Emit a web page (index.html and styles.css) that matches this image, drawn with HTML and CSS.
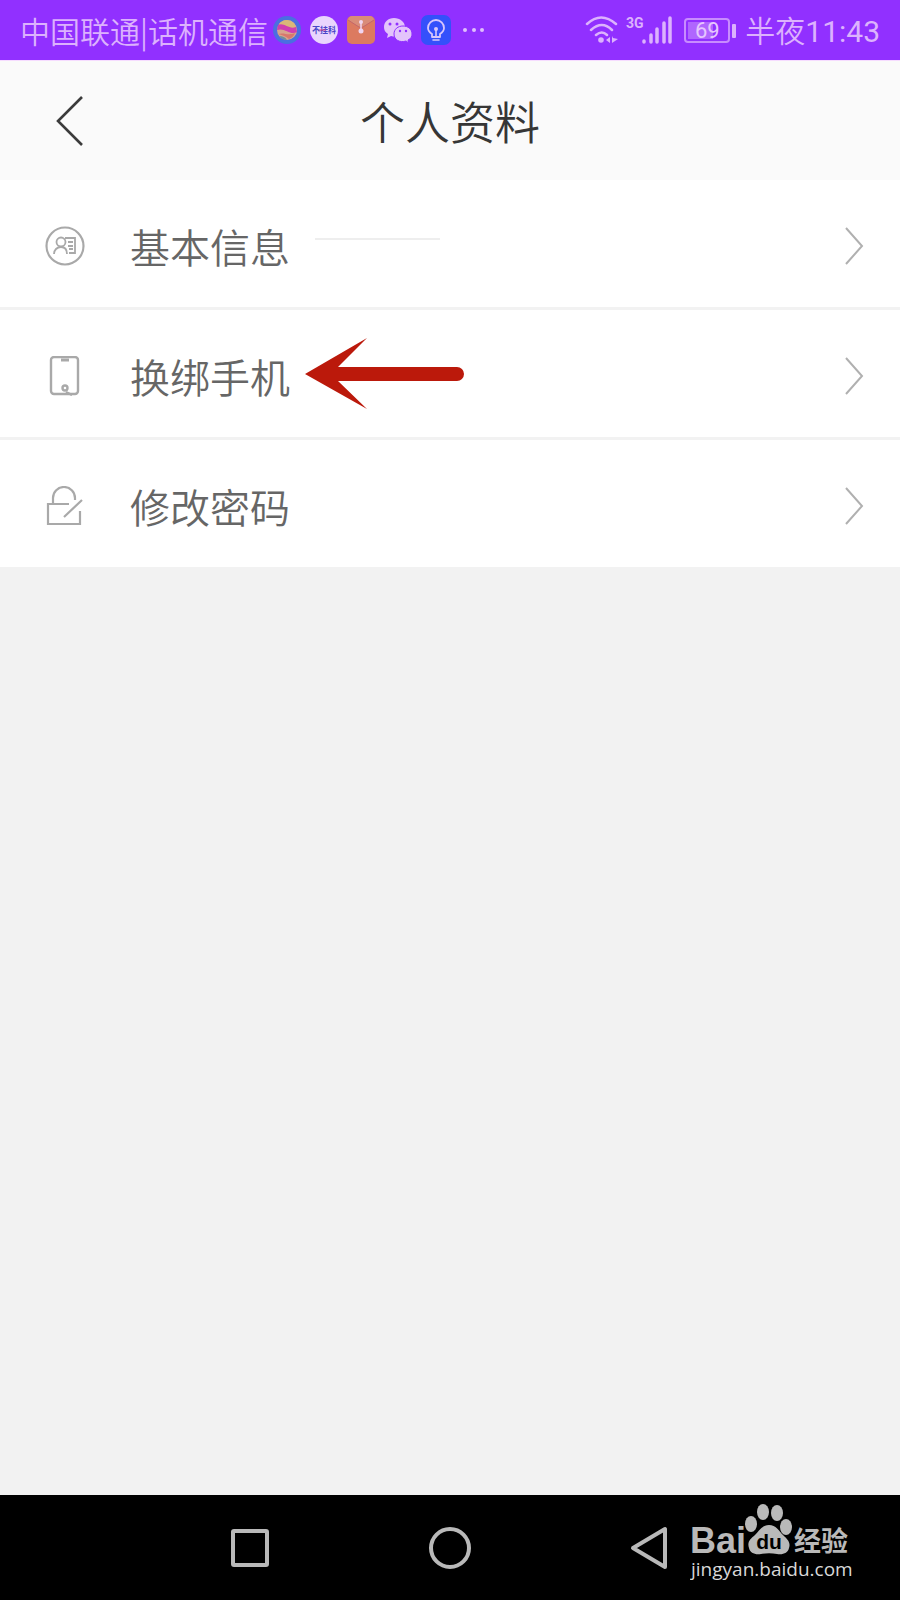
FILE: index.html
```html
<!DOCTYPE html>
<html lang="zh-CN">
<head>
<meta charset="utf-8">
<meta name="viewport" content="width=device-width, initial-scale=1">
<title>个人资料</title>
<link rel="stylesheet" href="styles.css">
</head>
<body>
<div class="screen">
  <div class="status">
    <span class="carrier">中国联通|话机通信</span>
    <div class="apps">
      <svg width="28" height="28" viewBox="0 0 28 28" aria-hidden="true">
        <circle cx="14" cy="14" r="14" fill="#4a6fe0"/>
        <circle cx="14" cy="14" r="10" fill="#d8a48c"/>
        <path d="M6 8a10 10 0 0 1 15-1l2 4c-6 3-11-1-17-3z" fill="#d9b878"/>
        <path d="M5 9c6-3 11 5 18 2l1 5c-7 4-12-5-20-2z" fill="#cf3fb0"/>
        <path d="M5 18c6-2 10 2 17-1a10 10 0 0 1-6 6c-4-3-7-4-11-5z" fill="#d9776c"/>
        <path d="M6 20c4 0 6 1 8 4a10 10 0 0 1-8-4z" fill="#6e8f9c"/>
      </svg>
      <svg width="28" height="28" viewBox="0 0 28 28" aria-hidden="true">
        <circle cx="14" cy="14" r="14" fill="#e9d5fd"/>
        <text x="14" y="17" class="badge-text">不挂科</text>
        <path d="M9 14h7" stroke="#d6447c" stroke-width="1"/>
      </svg>
      <svg width="28" height="28" viewBox="0 0 28 28" aria-hidden="true">
        <rect width="28" height="28" rx="5" fill="#dc7a60"/>
        <path d="M1 4a5 5 0 0 1 4-4h18a5 5 0 0 1 4 4L16 11q-2 1-4 0z" fill="#d98c78"/>
        <path d="M1 4l11 7q2 1 4 0L27 4" fill="none" stroke="#c4666a"/>
        <path d="M14 7v7" stroke="#f0d5ef" stroke-width="1.500"/>
        <circle cx="14" cy="6" r="2" fill="#f0d5ef"/><circle cx="14" cy="15" r="2.500" fill="#f0d5ef"/>
      </svg>
      <svg width="28" height="28" viewBox="0 0 28 28" aria-hidden="true">
        <path d="M10 2C4 2 0 6 0 11c0 3 1 5 4 7l-1 4 4-2c8 2 14-2 14-9 0-5-5-9-11-9z" fill="#e3c3fb"/>
        <path d="M19 10c-5 0-9 3-9 8 0 6 6 9 12 7l3 2-1-3c3-1 4-4 4-6 0-5-4-8-9-8z" fill="#e3c3fb" stroke="#9130ff"/>
        <g fill="#9130ff"><circle cx="6" cy="8" r="1.500"/><circle cx="13" cy="8" r="1.500"/><circle cx="16" cy="15" r="1.200"/><circle cx="22" cy="15" r="1.200"/></g>
      </svg>
      <svg width="30" height="30" viewBox="0 0 30 30" aria-hidden="true">
        <rect width="30" height="30" rx="7" fill="#3450fb"/>
        <path d="M11 22v-3c-3-2-4-4-4-6a8 8 0 0 1 16 0c0 2-1 4-4 6v3z" fill="none" stroke="#d8c6fb" stroke-width="1.800" stroke-linejoin="round"/>
        <path d="M15 14v7M12 25h6" stroke="#d8c6fb" stroke-width="1.600" stroke-linecap="round"/>
        <circle cx="15" cy="14" r="2" fill="#d8c6fb"/>
      </svg>
      <svg width="28" height="28" viewBox="0 0 28 28" aria-hidden="true" fill="#e0bdfd">
        <circle cx="5" cy="14" r="2"/><circle cx="14" cy="14" r="2"/><circle cx="22" cy="14" r="2"/>
      </svg>
    </div>
    <div class="signals">
      <svg width="88" height="30" viewBox="0 0 88 30" aria-hidden="true" fill="none" stroke="#dcb2fd" stroke-width="2.500" stroke-linecap="round">
        <path d="M2 9q14-13 29 0M6 15q11-10 21 0M11 20q6-5 11 0"/>
        <circle cx="16" cy="25" r="2.800" fill="#dcb2fd" stroke="none"/>
        <path d="M25 22v6l-4-3zM27 28v-7l1 2 5 1z" fill="#dcb2fd" stroke="none"/>
        <text x="41" y="13" class="net-text">3G</text>
        <path d="M59 26v1M66 20v7M72 14v13M79 8v19M85 3v24" stroke-width="3.500"/>
      </svg>
      <div class="battery"><span>69</span></div>
      <span class="clock">半夜<span class="digits">11:43</span></span>
    </div>
  </div>

  <header class="header">
    <button class="back" type="button" aria-label="返回">
      <svg width="28" height="52" viewBox="0 0 28 52" fill="none" stroke="#3b3b3b" stroke-width="2.600"><path d="M26 2L2 26l24 24"/></svg>
    </button>
    <h1 class="title">个人资料</h1>
  </header>

  <main class="list">
    <button class="row" type="button">
      <span class="icon">
        <svg width="40" height="40" viewBox="0 0 40 40" fill="none" stroke="#a9a9a9" stroke-width="1.800">
          <circle cx="20" cy="20" r="18.500" stroke-width="2.200"/>
          <circle cx="16" cy="16" r="4.500"/><path d="M9 28c0-4 3-7 7-7s6 3 6 7M20 12h10v15h-6M23 16h5M23 20h5M24 23h4"/>
        </svg>
      </span>
      <span class="label">基本信息</span>
      <span class="trace"></span>
      <svg class="chevron" width="20" height="40" viewBox="0 0 20 40"><path d="M2 2l16 18L2 38"/></svg>
    </button>
    <button class="row" type="button">
      <span class="icon">
        <svg width="40" height="40" viewBox="0 0 40 40" fill="none" stroke="#a9a9a9" stroke-width="2.400">
          <rect x="6" y="1" width="27" height="37" rx="3"/><path d="M16 4h8" stroke-width="3"/><circle cx="20" cy="32" r="2.500"/><path d="M21 36l6 3"/>
        </svg>
      </span>
      <span class="label">换绑手机</span>
      <svg class="arrow" width="160" height="72" viewBox="0 0 160 72" aria-hidden="true">
        <path d="M0 36L62 0 33 29H152a7 7 0 0 1 0 14H33L62 71z" fill="#bb190b"/>
      </svg>
      <svg class="chevron" width="20" height="40" viewBox="0 0 20 40"><path d="M2 2l16 18L2 38"/></svg>
    </button>
    <button class="row" type="button">
      <span class="icon">
        <svg width="40" height="40" viewBox="0 0 40 40" fill="none" stroke="#a9a9a9" stroke-width="2.200">
          <path d="M8 18v-6a11 11 0 0 1 22 0v2M24 18H3v20h32V25M19 31l18-17"/>
        </svg>
      </span>
      <span class="label">修改密码</span>
      <svg class="chevron" width="20" height="40" viewBox="0 0 20 40"><path d="M2 2l16 18L2 38"/></svg>
    </button>
  </main>

  <nav class="nav">
    <button type="button" aria-label="最近任务"><svg width="44" height="44" viewBox="0 0 44 44"><rect x="5" y="5" width="34" height="34" rx="1"/></svg></button>
    <button type="button" aria-label="主页"><svg width="44" height="44" viewBox="0 0 44 44"><circle cx="22" cy="22" r="19"/></svg></button>
    <button type="button" aria-label="返回"><svg width="44" height="44" viewBox="0 0 44 44"><path d="M37 3v38L5 22z"/></svg></button>
    <svg class="watermark" width="164" height="84" viewBox="0 0 164 84" fill="#b9b9b9">
      <text x="0" y="50" class="logo-latin">Bai</text>
      <ellipse cx="61" cy="21" rx="6" ry="8"/><ellipse cx="73" cy="9" rx="6" ry="8"/><ellipse cx="87" cy="10" rx="6" ry="8"/><ellipse cx="96" cy="24" rx="6" ry="8"/>
      <path d="M79 22c-7 0-10 6-14 10-5 4-8 7-6 13 1 5 6 7 12 6 5-1 11-1 16 0 6 1 11-1 12-6 2-6-2-9-6-13-4-4-7-10-14-10z"/>
      <text x="79" y="46" class="logo-du">du</text>
      <text x="104" y="48" class="logo-cjk">经验</text>
      <text x="1" y="73" class="site">jingyan.baidu.com</text>
    </svg>
  </nav>
</div>
</body>
</html>
```

FILE: styles.css
```css
* {
  box-sizing: border-box;
}

body {
  margin: 0;
  background: #f2f2f2;
  font-family: "Noto Sans CJK SC", sans-serif;
  font-weight: 350;
}

button {
  padding: 0;
  border: 0;
  background: none;
  font: inherit;
  color: inherit;
  cursor: pointer;
}

svg {
  display: block;
  flex: none;
}

.screen {
  display: flex;
  flex-direction: column;
  min-height: 100vh;
}

.status {
  display: flex;
  align-items: center;
  height: 60px;
  padding: 0 20px;
  background: #9130ff;
  color: #dcb2fd;
  font-size: 30px;
  line-height: 40px;
  white-space: nowrap;
}

.apps {
  display: flex;
  align-items: center;
  gap: 9px;
  margin-left: 5px;
}

.badge-text {
  font: 700 8px "Noto Sans CJK SC", sans-serif;
  fill: #4a45c8;
  text-anchor: middle;
}

.signals {
  display: flex;
  align-items: center;
  margin-left: auto;
}

.net-text {
  font: 700 14px Roboto, sans-serif;
  fill: #dcb2fd;
  stroke: none;
}

.battery {
  position: relative;
  width: 46px;
  height: 25px;
  margin: 0 15px 0 11px;
  padding: 2px;
  border: 2px solid #c88cfe;
  border-radius: 4px;
  background: linear-gradient(90deg, #b066fe 66%, transparent 66%) content-box;
  color: #e6c6fe;
  font-family: Roboto, sans-serif;
  font-size: 22px;
  font-weight: 400;
  line-height: 18px;
  text-align: center;
}

.battery::after {
  content: "";
  position: absolute;
  top: 4px;
  right: -8px;
  width: 4px;
  height: 14px;
  border-radius: 1px;
  background: #dcb2fd;
}

.clock {
  padding-top: 4px;
  font-family: Roboto, "Noto Sans CJK SC", sans-serif;
}

.digits {
  font-weight: 400;
}

.header {
  display: grid;
  grid-template-columns: 140px 1fr 140px;
  align-items: center;
  height: 120px;
  border-top: 1px solid #f6dcff;
  background: #fafafa;
}

.back {
  display: flex;
  align-items: center;
  justify-content: center;
  height: 100%;
}

.title {
  margin: 0;
  color: #363636;
  font-size: 45px;
  font-weight: 350;
  line-height: 60px;
  text-align: center;
}

.list {
  display: flex;
  flex-direction: column;
  gap: 3px;
}

.row {
  display: flex;
  align-items: center;
  height: 127px;
  padding: 4px 36px 0 45px;
  background: #fff;
  color: #666;
  text-align: left;
}

.icon {
  width: 85px;
}

.label {
  font-size: 40px;
  line-height: 60px;
}

.trace {
  width: 125px;
  height: 2px;
  margin: 0 0 14px 25px;
  background: #eee;
}

.arrow {
  margin: 0 0 4px 15px;
}

.chevron {
  margin-left: auto;
  fill: none;
  stroke: #b0b0b0;
  stroke-width: 2;
}

.nav {
  position: relative;
  display: grid;
  grid-template-columns: repeat(3, 1fr);
  height: 105px;
  margin-top: auto;
  padding: 0 calc(100% / 6);
  background: #000;
}

.nav button {
  display: flex;
  align-items: center;
  justify-content: center;
}

.nav button svg {
  fill: none;
  stroke: #b9b9b9;
  stroke-width: 4;
  stroke-linejoin: round;
}

.watermark {
  position: absolute;
  top: 8px;
  right: 46px;
}

.logo-latin {
  font: 700 36px "Liberation Sans", sans-serif;
}

.logo-du {
  font: 700 21px "Liberation Sans", sans-serif;
  fill: #000;
  text-anchor: middle;
}

.logo-cjk {
  font: 700 27px "Noto Sans CJK SC", sans-serif;
}

.site {
  font: 400 19px "Open Sans", sans-serif;
  fill: #d8d8d8;
}
```
